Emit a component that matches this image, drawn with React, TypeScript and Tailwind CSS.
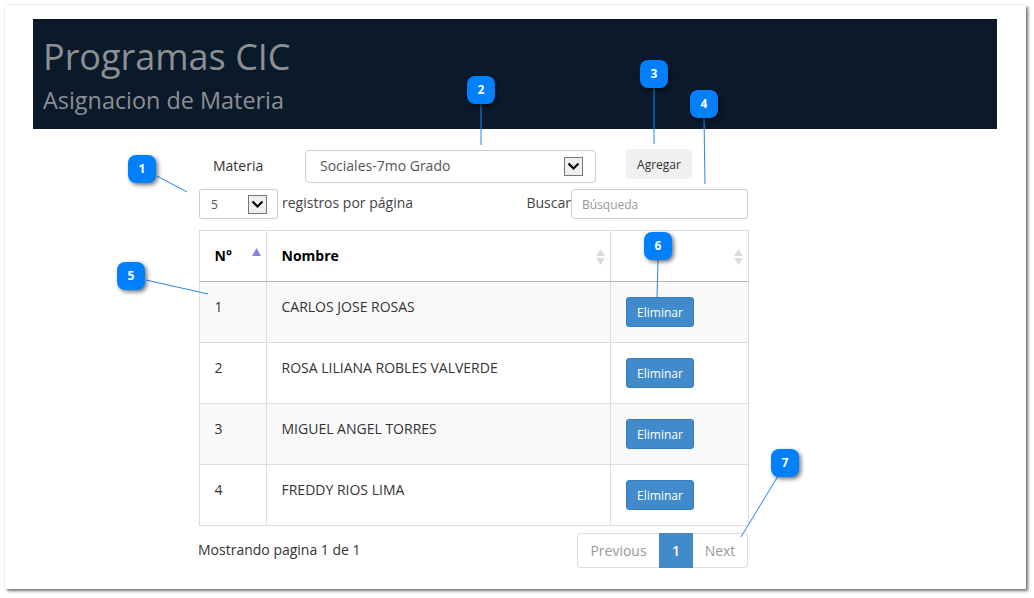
const rows = [
  { n: 1, name: "CARLOS JOSE ROSAS" },
  { n: 2, name: "ROSA LILIANA ROBLES VALVERDE" },
  { n: 3, name: "MIGUEL ANGEL TORRES" },
  { n: 4, name: "FREDDY RIOS LIMA" },
];

// Numbered annotations: badge position plus the leader line that leaves it
const callouts = [
  { n: 1, x: 128, y: 155, line: [157, 176, 187, 192] },
  { n: 2, x: 467, y: 76, line: [481, 104, 481, 145] },
  { n: 3, x: 640, y: 60, line: [654, 88, 654, 144] },
  { n: 4, x: 690, y: 90, line: [704, 118, 705, 184] },
  { n: 5, x: 117, y: 262, line: [146, 280, 208, 294] },
  { n: 6, x: 644, y: 232, line: [658, 260, 657, 298] },
  { n: 7, x: 771, y: 449, line: [778, 476, 741, 537] },
];

function SelectArrow() {
  return (
    <span className="flex h-[19px] w-[19px] items-center justify-center border border-[#767676] bg-[#efefef]">
      <svg width="13" height="9" viewBox="0 0 13 9" fill="none">
        <path d="M1.5 1.5 6.5 6.5 11.5 1.5" stroke="#000" strokeWidth="2" />
      </svg>
    </span>
  );
}

function SortIcon({ active }: { active?: boolean }) {
  if (active) {
    return (
      <svg width="9" height="8" viewBox="0 0 9 8" className="absolute right-[5px] top-[17px]">
        <path d="M4.5 0 9 8H0z" fill="#8585d8" />
      </svg>
    );
  }
  return (
    <svg width="9" height="16" viewBox="0 0 9 16" className="absolute right-[5px] top-[18px]">
      <path d="M4.5 0 9 7H0zM4.5 16 0 9h9z" fill="#dcdcdc" />
    </svg>
  );
}

export default function App() {
  return (
    <div className="relative h-[598px] w-[1034px] overflow-hidden bg-white font-['Open_Sans',sans-serif] text-[#333]">
      <div className="ml-[5px] mt-[5px] h-[584px] w-[1021px] bg-white px-7 pt-3.5 shadow-[2px_2px_3px_rgba(0,0,0,0.55),0_0_2px_rgba(0,0,0,0.12)]">
        <header className="h-[110px] w-[964px] bg-[#0a1a2b] pl-2.5 pt-[12px] text-[#8d8f92]">
          <h1 className="text-[36px] leading-[52px]">Programas CIC</h1>
          <h2 className="text-[23.4px] leading-[34px]">Asignacion de Materia</h2>
        </header>

        <div className="ml-[166px] w-[549px]">
          <div className="mt-5 flex items-start">
            <span className="ml-[14px] mt-[7px] w-[92px] text-sm leading-5">Materia</span>
            <div className="mt-px flex h-[33px] w-[291px] items-center justify-between rounded border border-[#ccc] pl-[14px] pr-3 text-sm text-[#555]">
              <span className="-translate-y-px">Sociales-7mo Grado</span>
              <SelectArrow />
            </div>
            <button className="ml-[30px] h-[30px] w-[66px] rounded-sm bg-[#f0f0f0] pt-0.5 text-xs text-[#333]">Agregar</button>
          </div>

          <div className="mt-1.5 flex h-[30px] items-center">
            <div className="flex h-[30px] w-[79px] items-center justify-between rounded-[3px] border border-[#ccc] pl-3 pr-[10px] text-xs text-[#555]">
              <span className="-translate-x-px translate-y-px">5</span>
              <SelectArrow />
            </div>
            <span className="ml-1 -translate-y-px text-sm text-[#444]">registros por página</span>
            <span className="ml-auto -translate-y-px text-sm text-[#444]">Buscar</span>
            <div className="flex h-[30px] w-[177px] items-center rounded-[3px] border border-[#ccc] px-2.5 pt-0.5 text-xs text-[#999]">Búsqueda</div>
          </div>

          <table className="mt-[11px] w-[549px] table-fixed border-collapse text-sm">
            <colgroup>
              <col className="w-[67px]" />
              <col className="w-[344px]" />
              <col className="w-[138px]" />
            </colgroup>
            <thead>
              <tr className="h-[51px]">
                <th className="relative border border-[#ddd] border-b-[#b4b4b4] pl-[14.5px] text-left font-bold text-black">
                  N°
                  <SortIcon active />
                </th>
                <th className="relative border border-[#ddd] border-b-[#b4b4b4] pl-[14.5px] text-left font-bold text-black">
                  Nombre
                  <SortIcon />
                </th>
                <th className="relative border border-[#ddd] border-b-[#b4b4b4]">
                  <SortIcon />
                </th>
              </tr>
            </thead>
            <tbody>
              {rows.map((row) => (
                <tr key={row.n} className="h-[61px] odd:bg-[#f9f9f9]">
                  <td className="border border-[#ddd] pb-[10px] pl-[14.5px] align-middle">{row.n}</td>
                  <td className="border border-[#ddd] pb-[10px] pl-[14.5px] align-middle">{row.name}</td>
                  <td className="border border-[#ddd] pl-[15px] align-middle">
                    <button className="block h-[30px] w-[68px] rounded-[3px] border border-[#357ebd] bg-[#428bca] pt-0.5 text-xs text-white">Eliminar</button>
                  </td>
                </tr>
              ))}
            </tbody>
          </table>

          <div className="mt-[7px] flex items-start justify-between">
            <span className="-ml-px mt-[7px] text-sm leading-5">Mostrando pagina 1 de 1</span>
            <nav className="flex h-[35px] text-sm">
              <span className="flex w-[82px] items-center justify-center rounded-l border border-r-0 border-[#ddd] text-[#999]">Previous</span>
              <span className="flex w-[34px] items-center justify-center bg-[#428bca] font-semibold text-white">1</span>
              <span className="flex w-[55px] items-center justify-center rounded-r border border-l-0 border-[#ddd] text-[#999]">Next</span>
            </nav>
          </div>
        </div>
      </div>

      {callouts.map((c) => (
        <div key={c.n}>
          <svg className="pointer-events-none absolute left-0 top-0" width="1034" height="598">
            <line x1={c.line[0]} y1={c.line[1]} x2={c.line[2]} y2={c.line[3]} stroke="#1e88f0" strokeWidth="1" />
          </svg>
          <div className="absolute flex h-7 w-7 items-center justify-center rounded-lg bg-[#007fff] text-xs font-bold text-white shadow-[2px_2px_4px_rgba(0,0,0,0.55)]" style={{ left: c.x, top: c.y }}>
            {c.n}
          </div>
        </div>
      ))}
    </div>
  );
}
